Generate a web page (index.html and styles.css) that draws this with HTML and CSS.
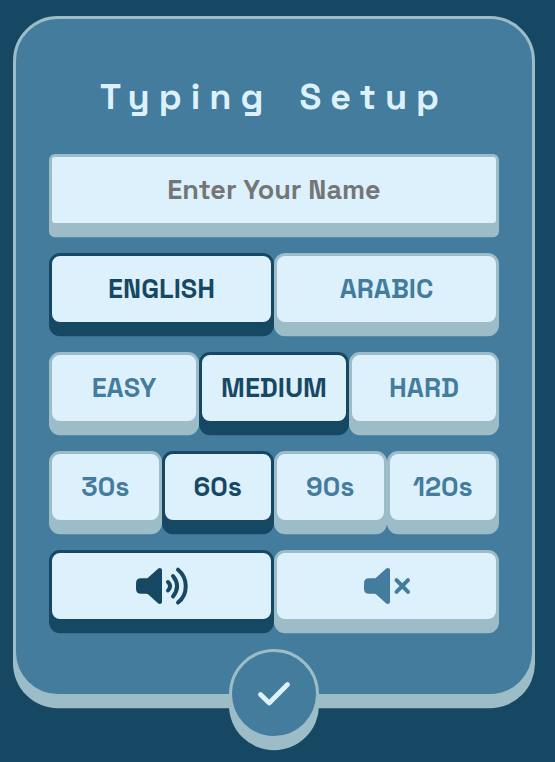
FILE: index.html
```html
<!DOCTYPE html>
<html lang="en">
<head>
<meta charset="utf-8">
<title>Typing Setup</title>
<link rel="stylesheet" href="styles.css">
</head>
<body>
<main class="card">
  <h1 class="title">Typing Setup</h1>
  <form class="form">
    <input class="name" type="text" placeholder="Enter Your Name" aria-label="Name">
    <div class="row">
      <button type="button" class="option selected">ENGLISH</button>
      <button type="button" class="option">ARABIC</button>
    </div>
    <div class="row">
      <button type="button" class="option">EASY</button>
      <button type="button" class="option selected">MEDIUM</button>
      <button type="button" class="option">HARD</button>
    </div>
    <div class="row">
      <button type="button" class="option">30s</button>
      <button type="button" class="option selected">60s</button>
      <button type="button" class="option">90s</button>
      <button type="button" class="option">120s</button>
    </div>
    <div class="row">
      <button type="button" class="option sound selected" aria-label="Sound on">
        <svg class="icon" width="54" height="40" viewBox="0 0 54 40">
          <path class="fill" d="M6 12.3H11.5Q12.3 12.3 13 11.7L23 2.8C24.5 1.4 27 2 27 4.3V35.7C27 38 24.5 38.6 23 37.2L13 28.3Q12.3 27.7 11.5 27.7H6Q1 27.7 1 22.7V17.3Q1 12.3 6 12.3Z"/>
          <path class="line" d="M33 16Q37.2 20 33 24.5M38 10Q46.2 20 38 30.5M43 3.7C53.3 12 53.3 28.5 43 36.5"/>
        </svg>
      </button>
      <button type="button" class="option sound" aria-label="Sound off">
        <svg class="icon" width="48" height="40" viewBox="0 0 48 40">
          <path class="fill" d="M6 12.3H11.5Q12.3 12.3 13 11.7L23 2.8C24.5 1.4 27 2 27 4.3V35.7C27 38 24.5 38.6 23 37.2L13 28.3Q12.3 27.7 11.5 27.7H6Q1 27.7 1 22.7V17.3Q1 12.3 6 12.3Z"/>
          <path class="line" d="M33.5 14.2L45 25.8M45 14.2L33.5 25.8"/>
        </svg>
      </button>
    </div>
  </form>
  <button type="button" class="submit" aria-label="Confirm">
    <svg width="36" height="28" viewBox="0 0 36 28"><path d="M4.5 14.5L13.2 23L31.5 4.5"/></svg>
  </button>
</main>
</body>
</html>
```
FILE: styles.css
```css
* { box-sizing: border-box; }

:root {
  --navy: #174863;
  --blue: #447c9d;
  --mist: #9cbdc8;
  --ice: #ddf1fd;
}

body {
  margin: 0;
  height: 762px;
  padding: 16px 20px 0 13px;
  overflow: hidden;
  background: var(--navy);
  font-family: "Space Grotesk", Inter, sans-serif;
}

.card {
  position: relative;
  height: 681px;
  padding: 0 33px;
  border: 3px solid var(--mist);
  border-radius: 45px;
  background: var(--blue);
  box-shadow: 0 11.2px 0 var(--mist);
}

.title {
  margin: 0;
  height: 135px;
  padding-top: 55px;
  color: var(--ice);
  font-size: 36px;
  font-weight: 700;
  line-height: 46px;
  letter-spacing: 9px;
  word-spacing: 9px;
  text-align: center;
  white-space: nowrap;
}

.form {
  display: flex;
  flex-direction: column;
  gap: 27px;
}

.name,
.option {
  height: 72px;
  margin: 0;
  padding: 0 0 2px;
  border: 3px solid var(--mist);
  background: var(--ice);
  box-shadow: 0 11.2px 0 var(--mist);
  font-family: inherit;
  font-size: 27px;
  font-weight: 700;
  text-align: center;
}

.name {
  width: 100%;
  border-radius: 6px;
}

.name::placeholder { color: #757575; }

.row { display: flex; }

.option {
  display: flex;
  flex: 1 1 0;
  align-items: center;
  justify-content: center;
  border-radius: 11px;
  color: var(--blue);
}

.option.sound { padding-bottom: 0; }

.selected {
  border-color: var(--navy);
  box-shadow: 0 11.2px 0 var(--navy);
  color: var(--navy);
}

.icon .fill { fill: currentColor; }

.icon .line {
  fill: none;
  stroke: currentColor;
  stroke-width: 4;
  stroke-linecap: round;
}

.submit {
  position: absolute;
  bottom: -45px;
  left: 213px;
  display: flex;
  align-items: center;
  justify-content: center;
  width: 90px;
  height: 90px;
  padding: 0;
  border: 3px solid var(--mist);
  border-radius: 50%;
  background: var(--blue);
  box-shadow: 0 11.2px 0 var(--mist);
}

.submit path {
  fill: none;
  stroke: var(--ice);
  stroke-width: 4.8;
  stroke-linecap: round;
  stroke-linejoin: round;
}
```
